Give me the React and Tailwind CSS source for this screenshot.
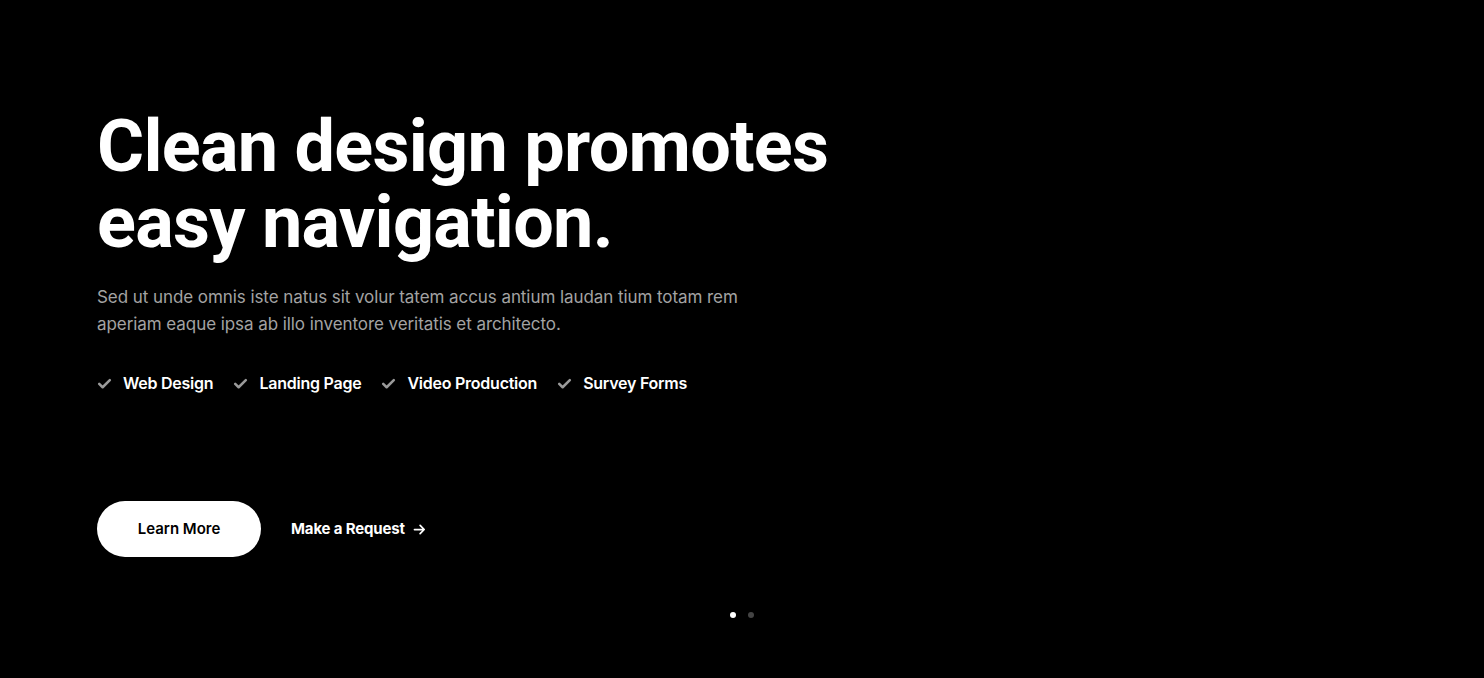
import React from "react";

function Check() {
  return (
    <svg width="15" height="15" viewBox="0 0 24 24" fill="none" stroke="#9a9a9a" strokeWidth="4" strokeLinecap="round" strokeLinejoin="round">
      <path d="M3.5 12.5l5.5 5.5L20.5 6.5" />
    </svg>
  );
}

export default function App() {
  const items = ["Web Design", "Landing Page", "Video Production", "Survey Forms"];
  return (
    <div className="w-[1484px] h-[678px] bg-black text-white overflow-hidden" style={{ fontFamily: "Inter, 'Noto Sans', sans-serif" }}>
      <div className="pl-[97px] pt-[109px] flex flex-col">
        <h1 className="text-[72px] leading-[76px] font-bold tracking-[-0.01em]" style={{ fontFamily: "Roboto, Inter, sans-serif" }}>
          Clean design promotes
          <br />
          easy navigation.
        </h1>
        <p className="mt-[23px] text-[17px] leading-[27px] text-[#a3a3a3] tracking-[-0.004em] w-[680px]">
          Sed ut unde omnis iste natus sit volur tatem accus antium laudan tium totam rem aperiam eaque ipsa ab illo inventore veritatis et architecto.
        </p>
        <div className="mt-[33px] flex items-center gap-[20px]">
          {items.map((t) => (
            <div key={t} className="flex items-center gap-[11px]">
              <Check />
              <span className="text-[16px] font-semibold tracking-[-0.015em]">{t}</span>
            </div>
          ))}
        </div>
        <div className="mt-[106px] flex items-center gap-[30px]">
          <button className="w-[164px] h-[56px] rounded-full bg-white text-black text-[15px] font-semibold">Learn More</button>
          <div className="flex items-center gap-[7px] text-[15px] font-bold tracking-[-0.01em]">
            Make a Request
            <svg width="15" height="15" viewBox="0 0 24 24" fill="none" stroke="white" strokeWidth="2.8" strokeLinecap="round" strokeLinejoin="round">
              <path d="M4 12h15M13 5.5l6.5 6.5-6.5 6.5" />
            </svg>
          </div>
        </div>
      </div>
      <div className="mt-[55px] flex justify-center gap-[12px]">
        <span className="w-[6px] h-[6px] rounded-full bg-white" />
        <span className="w-[6px] h-[6px] rounded-full bg-[#444]" />
      </div>
    </div>
  );
}
